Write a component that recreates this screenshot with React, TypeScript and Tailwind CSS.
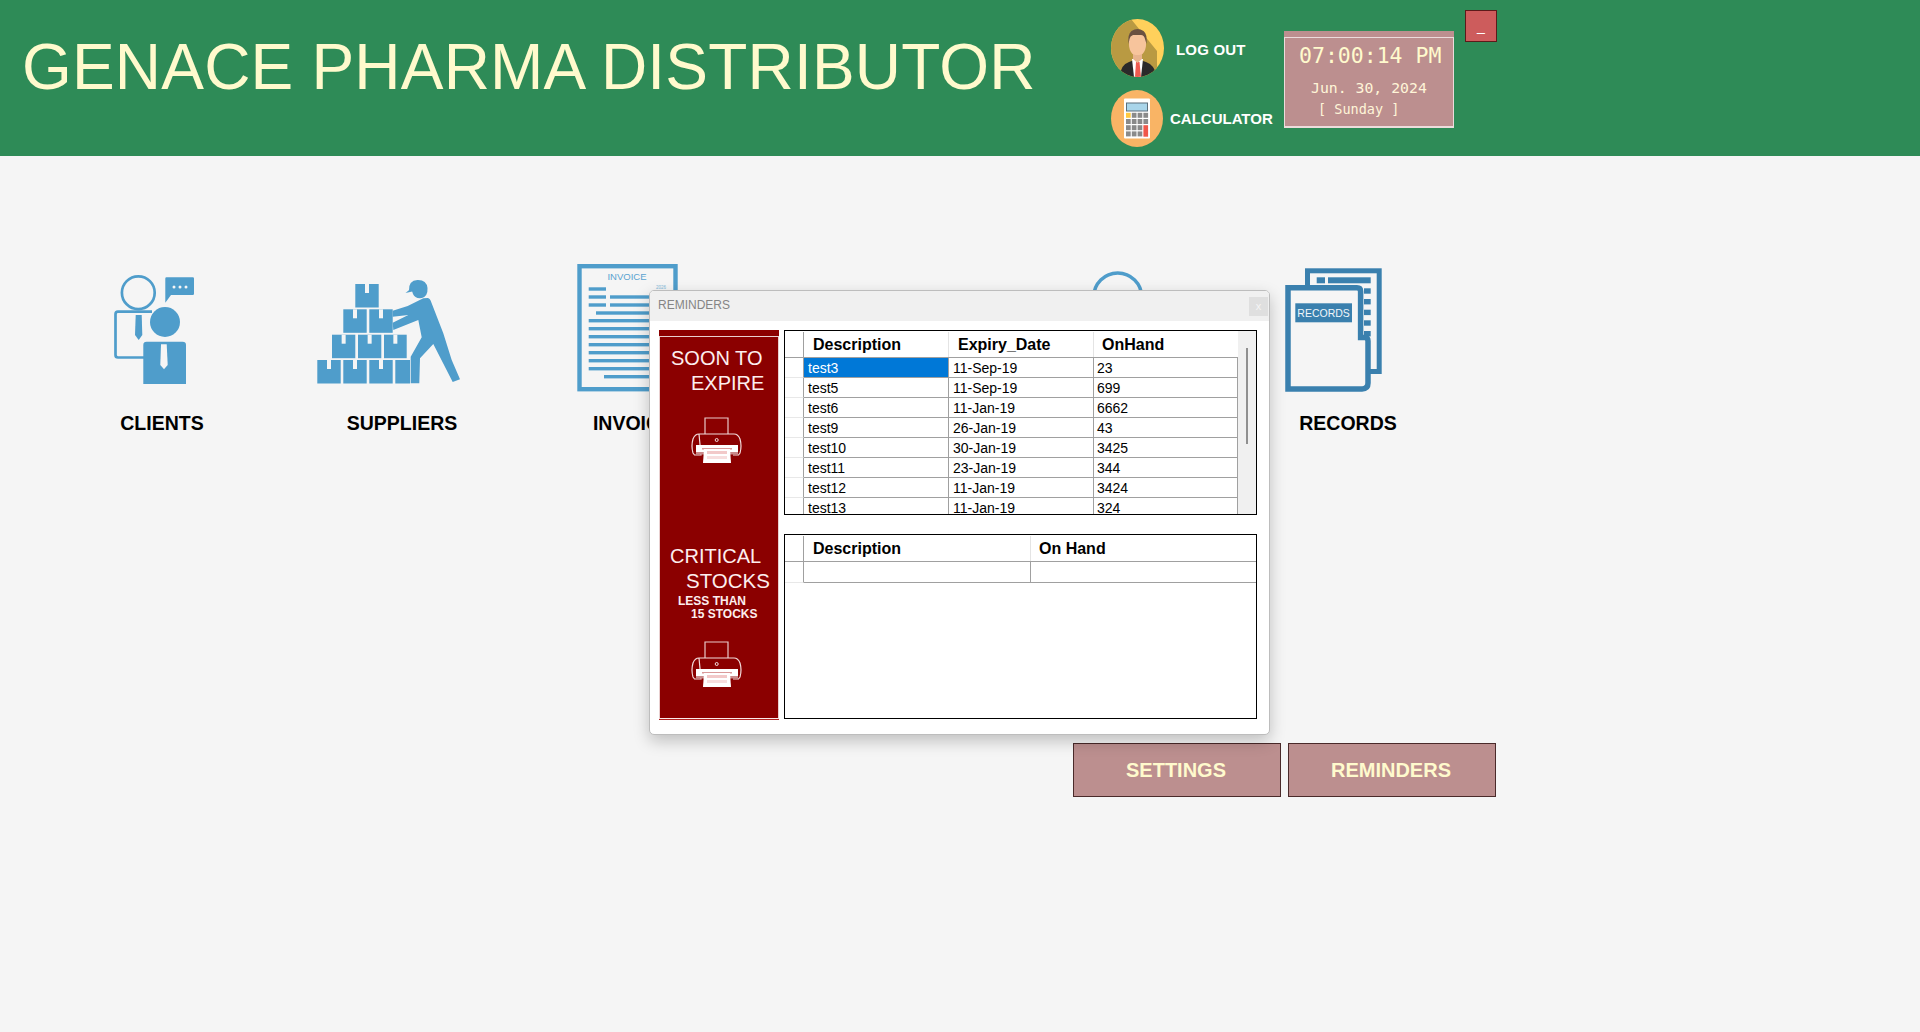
import React from "react";

const BLUE = "#4f9dcb";
const DARK = "#3a80ae";
const BG = "#f5f5f5";
const SANS = "font-['Liberation_Sans',Arial,sans-serif]";

function Box({ x, y, w }: { x: number; y: number; w: number }) {
  return (
    <g>
      <rect x={x} y={y} width={w} height={23.5} fill={BLUE} />
      {w > 20 && <rect x={x + w / 2 - 2} y={y} width={4} height={9} fill={BG} />}
    </g>
  );
}

function ClientsIcon() {
  return (
    <svg width="200" height="120" viewBox="61 265 200 120">
      <circle cx="138.3" cy="292.7" r="16.4" fill="none" stroke={BLUE} strokeWidth="2.7" />
      <path d="M152 311.7H118q-2.5 0-2.5 2.5V355q0 2.5 2.5 2.5H145" fill="none" stroke={BLUE} strokeWidth="2.7" />
      <path d="M135.7 315h6l.6 20-3.6 5-3.7-5z" fill={BLUE} />
      <circle cx="165" cy="322" r="15" fill={BLUE} />
      <path d="M143.3 384V345q0-3.3 3.3-3.3h36q3.4 0 3.4 3.3v39z" fill={BLUE} />
      <path d="M161 344.3h5.7l1 20.7-3.7 4.3-3.7-4.3z" fill={BG} />
      <path d="M165.3 278.5q0-1.2 1.2-1.2h26.3q1.2 0 1.2 1.2v15.3q0 1.2-1.2 1.2H171l-5.7 7.7z" fill={BLUE} />
      <circle cx="174" cy="287" r="1.5" fill={BG} />
      <circle cx="180" cy="287" r="1.5" fill={BG} />
      <circle cx="186" cy="287" r="1.5" fill={BG} />
    </svg>
  );
}

function SuppliersIcon() {
  return (
    <svg width="200" height="120" viewBox="302 265 200 120">
      <Box x={317.3} y={360} w={23.4} />
      <Box x={343.3} y={360} w={23.4} />
      <Box x={369.3} y={360} w={23.4} />
      <Box x={395.3} y={360} w={14.7} />
      <Box x={332} y={334.7} w={23.3} />
      <Box x={358} y={334.7} w={23.3} />
      <Box x={384} y={334.7} w={22.7} />
      <Box x={343.3} y={309.3} w={23.4} />
      <Box x={369.3} y={309.3} w={23.4} />
      <Box x={355.3} y={284} w={23.4} />
      <path d="M409 290.500q-.5-10 8.500-10.500 9-.3 10 8 .5 8-5.500 10-7 1-9-4l-1-3z" fill={BLUE} />
      <path d="M411 288.500l-5.500 4.500 8-1.800z" fill={BLUE} />
      <path d="M423.3 298.300L428 298q2 .5 2.600 2.500l12.700 32.800 8.400 26.700 8.300 19.300-7.300 2.700-19.400-38-13.300 14.300-.7 25H410.700v-26.600l11-19.400-3.400-17.300-25 10-.6-7.300 15.600-7.700-15.600 1.700v-6l15-4.700z" fill={BLUE} />
    </svg>
  );
}

function InvoiceIcon() {
  const ys = [319, 327, 335, 343, 351, 359, 367];
  return (
    <svg width="200" height="130" viewBox="543 265 200 130" className="overflow-visible">
      <rect x="579.5" y="266.2" width="96" height="123" fill={BG} stroke={BLUE} strokeWidth="4.4" />
      <text x="627" y="280" textAnchor="middle" fontSize="9.5" fill="#5aa3d0" fontFamily="Liberation Sans">INVOICE</text>
      <text x="661" y="289" textAnchor="middle" fontSize="4.5" fill="#7fb8da" fontFamily="Liberation Sans">2026</text>
      <rect x="588.7" y="287.3" width="17.3" height="3.4" fill={BLUE} />
      <rect x="588.7" y="295.3" width="17.3" height="3.4" fill={BLUE} />
      <rect x="610" y="295.3" width="55" height="3.4" fill={BLUE} />
      <rect x="588.7" y="303.3" width="17.3" height="3.4" fill={BLUE} />
      <rect x="610" y="303.3" width="55" height="3.4" fill={BLUE} />
      <rect x="596" y="311.3" width="69" height="3.4" fill={BLUE} />
      {ys.map((y) => (
        <rect key={y} x="588.7" y={y} width="76" height="3.4" fill={BLUE} />
      ))}
      <rect x="604" y="375" width="60" height="3.4" fill={BLUE} />
    </svg>
  );
}

function HiddenIcon() {
  return (
    <svg width="200" height="120" viewBox="1017 265 200 120">
      <circle cx="1117.7" cy="297" r="24" fill="none" stroke={BLUE} strokeWidth="3.4" />
    </svg>
  );
}

function RecordsIcon() {
  const ticks = [288.3, 299, 309.7, 320.3, 331];
  return (
    <svg width="200" height="130" viewBox="1248 265 200 130" className="overflow-visible">
      <rect x="1307.5" y="270.8" width="71.7" height="100.7" fill={BG} stroke={DARK} strokeWidth="5" />
      <rect x="1316.7" y="277.3" width="8.3" height="6" fill={DARK} />
      <rect x="1328" y="277.3" width="42.7" height="6" fill={DARK} />
      {ticks.map((y) => (
        <rect key={y} x="1364" y={y} width="6.7" height="5.4" fill={DARK} />
      ))}
      <path d="M1288 287.8H1357q3.6 0 3.6 3.6V337.5h4q3.4 0 3.4 3.4V383q0 5.9-5.9 5.9H1288z" fill={BG} stroke={DARK} strokeWidth="5.5" />
      <rect x="1295.3" y="303.3" width="56.7" height="19" fill={DARK} />
      <text x="1323.6" y="317" textAnchor="middle" fontSize="10.5" fill="#f0f6fa" fontFamily="Liberation Sans">RECORDS</text>
    </svg>
  );
}

function Printer() {
  return (
    <svg width="54" height="46" viewBox="0 0 54 46" className="block">
      <path d="M15 17V1h23v16" fill="none" stroke="#e9c9c9" strokeWidth="1.2" />
      <path d="M9 17h35q4 0 6 5 2 7 0 14l-1.500 2H43M11 38H4.500l-1.500-2q-2-7 0-14 2-5 6-5z" fill="none" stroke="#f2dcdc" strokeWidth="1.2" />
      <circle cx="26.700" cy="23" r="1.500" fill="none" stroke="#f2dcdc" strokeWidth="1" />
      <rect x="6" y="28" width="42" height="7" fill="#ffffff" />
      <rect x="12" y="31" width="30" height="1.500" fill="#d99a9a" />
      <rect x="6" y="35" width="42" height="2.500" fill="#c98a8a" />
      <path d="M14 32h26l1 14H13z" fill="#ffffff" />
      <rect x="17" y="34" width="20" height="3" fill="#f2c9c9" />
      <rect x="17" y="39" width="20" height="3" fill="#f7dede" />
    </svg>
  );
}

function Avatar() {
  return (
    <svg width="53" height="58" viewBox="0 0 53 58" className="block">
      <defs>
        <clipPath id="av">
          <ellipse cx="26.500" cy="29" rx="26.500" ry="29" />
        </clipPath>
      </defs>
      <g clipPath="url(#av)">
        <rect width="53" height="58" fill="#ffd05b" />
        <path d="M0 0H20L46 32V58H0z" fill="#b99a42" />
        <path d="M9 58q0-12 9-15l8-3 9 3q9 3 11 15z" fill="#2a2a2a" />
        <path d="M21 40h11l-2 18h-7z" fill="#ffffff" />
        <path d="M25 43h3.500l1.500 15h-6z" fill="#ef5b50" />
        <path d="M22 33h9v7l-4.500 4-4.500-4z" fill="#e8b48e" />
        <path d="M18 20q0-6 4-8h9q4 2 4 8v6q0 5-3.500 9l-3 1h-4l-3-1Q18 31 18 26z" fill="#f7c49c" />
        <path d="M17.500 25q-1-10 3-13 6-4 12 0 4 3 3 13l-1.500-5q-1-4-4-4h-8q-3 1-3.500 4z" fill="#6b5140" />
      </g>
    </svg>
  );
}

function Calculator() {
  const cols = [1, 2, 3, 4];
  const rows = [1, 2, 3, 4];
  return (
    <svg width="52" height="57" viewBox="0 0 52 57" className="block">
      <ellipse cx="26" cy="28.500" rx="26" ry="28.500" fill="#f9b465" />
      <rect x="13" y="8.500" width="26" height="40" rx="1" fill="#ffffff" />
      <rect x="15" y="12.500" width="22" height="9" fill="#5b6f7d" />
      <rect x="16" y="13.500" width="20" height="7" fill="#a9d5ea" />
      {rows.map((r) =>
        cols.map((c) => {
          const tall = c === 4 && r >= 3;
          if (c === 4 && r === 4) return null;
          const fill = r === 1 && c === 1 ? "#ffc93f" : tall ? "#f0574a" : "#8a8a8a";
          return (
            <rect
              key={`${r}-${c}`}
              x={15 + (c - 1) * 5.8}
              y={22.800 + (r - 1) * 6.200}
              width={4.700}
              height={tall ? 11.500 : 5}
              fill={fill}
            />
          );
        })
      )}
    </svg>
  );
}

function Tile({ label, className, labelClass = "", children }: { label?: string; className: string; labelClass?: string; children: React.ReactNode }) {
  return (
    <div className={`w-[200px] shrink-0 flex flex-col items-center ${className}`}>
      <div className="h-[147px] w-[200px]">{children}</div>
      {label && <div className={`text-[19.500px] leading-[22px] font-bold text-black whitespace-nowrap ${labelClass}`}>{label}</div>}
    </div>
  );
}

const top = [
  ["test3", "11-Sep-19", "23"],
  ["test5", "11-Sep-19", "699"],
  ["test6", "11-Jan-19", "6662"],
  ["test9", "26-Jan-19", "43"],
  ["test10", "30-Jan-19", "3425"],
  ["test11", "23-Jan-19", "344"],
  ["test12", "11-Jan-19", "3424"],
  ["test13", "11-Jan-19", "324"],
];

function ExpiryTable() {
  return (
    <div className="h-[185px] border border-black flex overflow-hidden bg-white">
      <div className="flex-1 min-w-0 pt-px">
        <div className="h-[26px] flex border-b border-[#a0a0a0] text-[16px] font-bold text-black leading-[25px]">
          <div className="w-[19px] border-r border-[#a0a0a0]" />
          <div className="w-[145px] pl-[9px] border-r border-[#e4e4e4]">Description</div>
          <div className="w-[145px] pl-[9px] border-r border-[#e4e4e4]">Expiry_Date</div>
          <div className="flex-1 pl-[8px]">OnHand</div>
        </div>
        {top.map((r, i) => (
          <div key={r[0]} className="h-[20px] flex text-[14px] text-black leading-[21px] shrink-0">
            <div className="w-[19px] border-r border-b border-r-[#a0a0a0] border-b-[#e8e8e8]" />
            <div className={`w-[145px] pl-[4px] border-b border-r border-[#a0a0a0] ${i === 0 ? "bg-[#0078d7] text-white" : ""}`}>{r[0]}</div>
            <div className="w-[145px] pl-[4px] border-b border-r border-[#a0a0a0]">{r[1]}</div>
            <div className="flex-1 pl-[3px] border-b border-r border-[#a0a0a0]">{r[2]}</div>
          </div>
        ))}
      </div>
      <div className="w-[18px] bg-[#f0f0f0] pt-[17px] flex justify-center">
        <div className="w-[2px] h-[96px] bg-[#8f8f8f]" />
      </div>
    </div>
  );
}

function StockTable() {
  return (
    <div className="h-[185px] mt-[19px] border border-black bg-white pt-px">
      <div className="h-[26px] flex border-b border-[#a0a0a0] text-[16px] font-bold text-black leading-[26px]">
        <div className="w-[19px] border-r border-[#a0a0a0]" />
        <div className="w-[227px] pl-[9px] border-r border-[#e4e4e4]">Description</div>
        <div className="flex-1 pl-[8px]">On Hand</div>
      </div>
      <div className="h-[21px] flex">
        <div className="w-[19px] border-r border-b border-r-[#a0a0a0] border-b-[#e8e8e8]" />
        <div className="w-[227px] border-b border-r border-[#a0a0a0]" />
        <div className="flex-1 border-b border-[#a0a0a0]" />
      </div>
    </div>
  );
}

function RedPanel() {
  return (
    <div className="w-[120px] h-[390px] flex flex-col text-[#fdeeee]">
      <div className="h-[6px] bg-[#8b0000]" />
      <div className="flex-1 bg-[#8b0000] border border-b-[#fbeaea] border-[#e9cfcf] flex flex-col">
        <div className="pt-[9px] pl-[11px] text-[20px] leading-[25px] whitespace-nowrap">SOON TO</div>
        <div className="pl-[31px] text-[20px] leading-[25px] whitespace-nowrap">EXPIRE</div>
        <div className="mt-[21px] ml-[30px]"><Printer /></div>
        <div className="mt-[81px] pl-[10px] text-[20px] leading-[25px] whitespace-nowrap">CRITICAL</div>
        <div className="-mt-px pl-[26px] text-[20.500px] leading-[25px] whitespace-nowrap">STOCKS</div>
        <div className="mt-[2px] pl-[18px] text-[12px] font-bold leading-[13px] whitespace-nowrap">LESS THAN</div>
        <div className="pl-[31px] text-[12px] font-bold leading-[13px] whitespace-nowrap">15 STOCKS</div>
        <div className="mt-[20px] ml-[30px]"><Printer /></div>
      </div>
      <div className="h-px bg-[#b02020]" />
    </div>
  );
}

export default function App() {
  return (
    <div className={`min-h-[1032px] bg-[#f5f5f5] ${SANS}`}>
      <header className="h-[156px] bg-[#2e8b57] flex">
        <h1 className="ml-[22px] mt-[30px] w-[1089px] shrink-0 text-[64px] tracking-[0.2px] leading-[74px] font-normal text-[#fffacd] whitespace-nowrap">
          GENACE PHARMA DISTRIBUTOR
        </h1>
        <div className="w-[173px] shrink-0 pt-[19px] flex flex-col gap-[12px] text-white font-bold text-[15px]">
          <div className="h-[58px] flex items-center">
            <Avatar />
            <span className="ml-[12px] mt-[4px] tracking-[0.2px]">LOG OUT</span>
          </div>
          <div className="h-[58px] flex items-center">
            <Calculator />
            <span className="ml-[7px] mt-[2px]">CALCULATOR</span>
          </div>
        </div>
        <div className="mt-[31px] w-[170px] h-[97px] shrink-0 flex flex-col font-['DejaVu_Sans_Mono',monospace] text-[#fffacd]">
          <div className="h-[6px] bg-[#bc8f8f]" />
          <div className="flex-1 bg-[#bc8f8f] border border-b-2 border-[#ecdcdc] flex flex-col">
            <div className="pl-[14px] pt-[5px] text-[21.500px] leading-[26px] whitespace-nowrap">07:00:14 PM</div>
            <div className="pl-[26px] pt-[9px] text-[14.800px] leading-[20px] whitespace-nowrap text-[#fff5d8]">Jun. 30, 2024</div>
            <div className="pl-[33px] pt-px text-[13.500px] leading-[20px] whitespace-pre text-[#fff5d8]">[ Sunday ]</div>
          </div>
        </div>
        <div className="ml-[11px] mt-[10px] w-[32px] h-[32px] bg-[#cd5c5c] border border-[#5c1a1a] flex items-center justify-center text-white text-[14px]">
          _
        </div>
      </header>

      <main className="relative">
        <div className="flex pt-[109px]">
          <Tile label="CLIENTS" labelClass="ml-[2px]" className="ml-[61px]"><ClientsIcon /></Tile>
          <Tile label="SUPPLIERS" className="ml-[41px]"><SuppliersIcon /></Tile>
          <Tile label="INVOICES" labelClass="mr-[7px]" className="ml-[41px]"><InvoiceIcon /></Tile>
          <Tile className="ml-[274px]"><HiddenIcon /></Tile>
          <Tile label="RECORDS" className="ml-[31px]"><RecordsIcon /></Tile>
        </div>

        <div className="mt-[309px] ml-[1073px] flex gap-[7px]">
          {["SETTINGS", "REMINDERS"].map((t) => (
            <button key={t} className="w-[208px] h-[54px] pr-[2px] bg-[#bc8f8f] border border-[#4a2a2a] text-[#fffacd] text-[20px] font-bold">
              {t}
            </button>
          ))}
        </div>

        <div className="absolute left-[649px] top-[134px] w-[621px] h-[445px] bg-white border border-[#bdbdbd] rounded-[5px] shadow-[0_6px_16px_rgba(0,0,0,0.22)] overflow-hidden">
          <div className="h-[30px] bg-[#f0f0f0] flex items-center justify-between pl-[8px] pr-[1px]">
            <span className="text-[12px] text-[#858585] pb-[2px]">REMINDERS</span>
            <span className="w-[19px] h-[19px] bg-[#dfdfdf] text-[#f5f5f5] text-[11px] leading-[18px] text-center">x</span>
          </div>
          <div className="flex pt-[9px] pl-[9px]">
            <RedPanel />
            <div className="ml-[5px] w-[473px]">
              <ExpiryTable />
              <StockTable />
            </div>
          </div>
        </div>
      </main>
    </div>
  );
}
